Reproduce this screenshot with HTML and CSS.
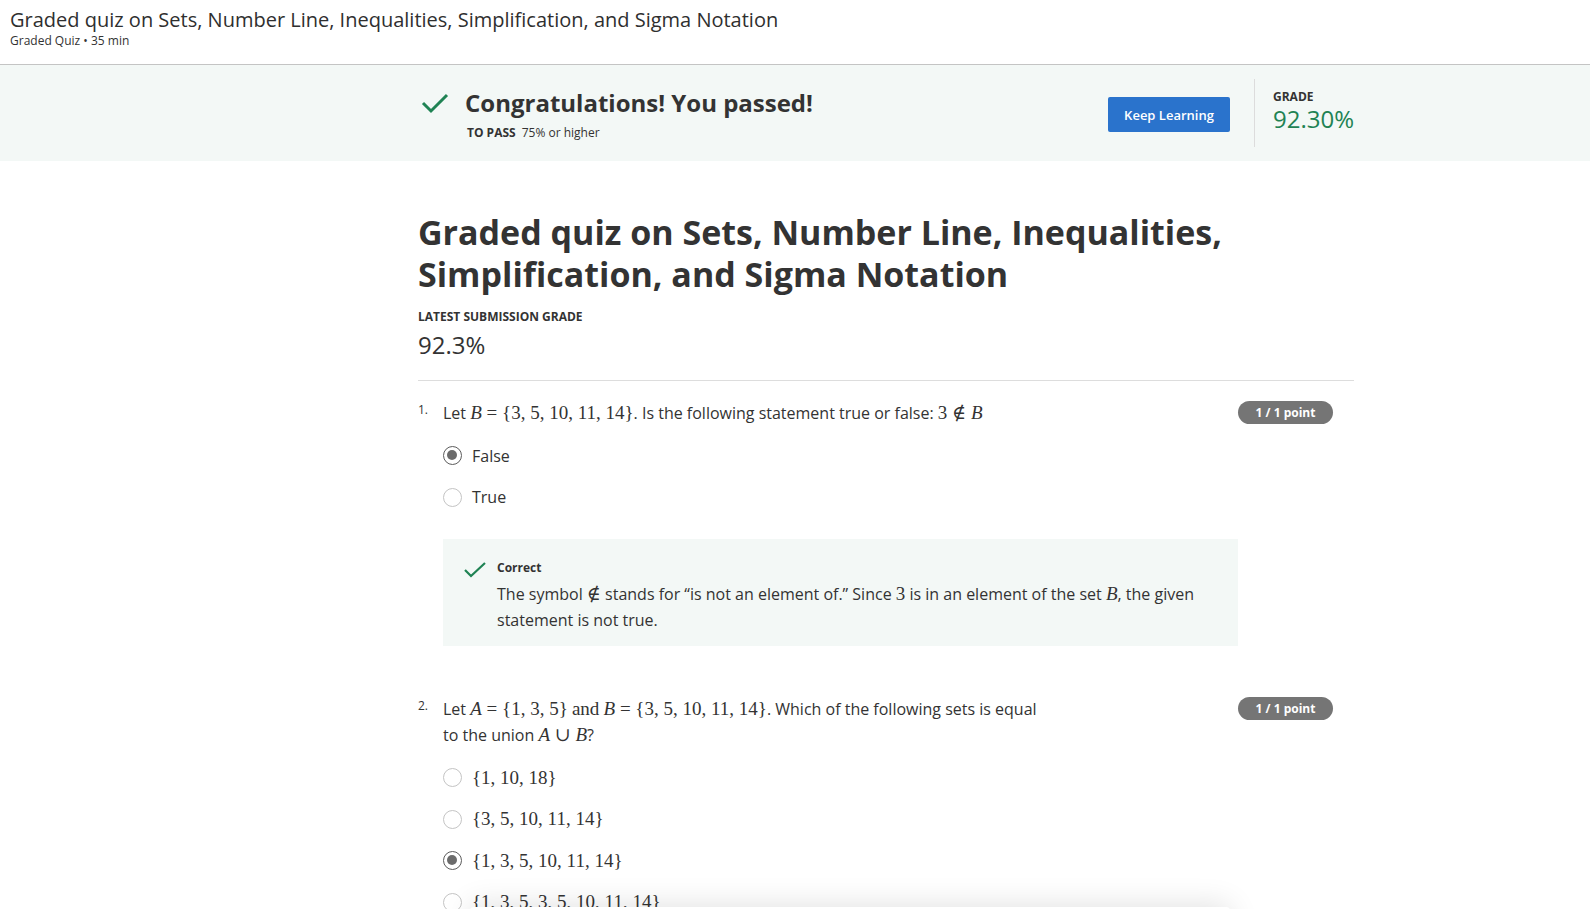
FILE: index.html
```html
<!DOCTYPE html>
<html lang="en">
<head>
<meta charset="utf-8">
<title>Graded quiz</title>
<link rel="stylesheet" href="styles.css">
</head>
<body>
<header class="topbar">
  <div class="topbar-title">Graded quiz on Sets, Number Line, Inequalities, Simplification, and Sigma Notation</div>
  <div class="topbar-sub">Graded Quiz • 35 min</div>
</header>

<section class="banner">
  <div class="banner-inner">
    <div class="pass">
      <svg class="pass-check" width="28" height="22" viewBox="0 0 28 22"><polyline points="2,11 10,19 26,3" fill="none" stroke="#1f8354" stroke-width="3"/></svg>
      <div class="pass-text">
        <div class="pass-title">Congratulations! You passed!</div>
        <div class="pass-sub"><b>TO PASS</b><span>75% or higher</span></div>
      </div>
    </div>
    <button class="btn-primary">Keep Learning</button>
    <div class="grade">
      <div class="grade-label">GRADE</div>
      <div class="grade-value">92.30%</div>
    </div>
  </div>
</section>

<main class="content">
  <h1 class="quiz-title">Graded quiz on Sets, Number Line, Inequalities, Simplification, and Sigma Notation</h1>
  <div class="latest-label">LATEST SUBMISSION GRADE</div>
  <div class="latest-value">92.3%</div>
  <hr class="rule">

  <div class="question">
    <div class="q-num">1.</div>
    <div class="q-body">
      <div class="q-prompt">Let <span class="m"><i>B</i> = {3, 5, 10, 11, 14}</span>. Is the following statement true or false: <span class="m">3 ∉ <i>B</i></span></div>
      <div class="options">
        <div class="option"><span class="radio checked"></span><span class="opt-text">False</span></div>
        <div class="option"><span class="radio"></span><span class="opt-text">True</span></div>
      </div>
    </div>
    <div class="badge">1 / 1 point</div>
    <div class="feedback">
      <svg class="fb-check" width="24" height="18" viewBox="0 0 24 18"><polyline points="2,9 8,15 22,2" fill="none" stroke="#1f8354" stroke-width="2.2"/></svg>
      <div class="fb-text">
        <div class="fb-title">Correct</div>
        <div class="fb-body">The symbol <span class="m">∉</span> stands for “is not an element of.” Since <span class="m">3</span> is in an element of the set <span class="m"><i>B</i></span>, the given statement is not true.</div>
      </div>
    </div>
  </div>

  <div class="question q2">
    <div class="q-num">2.</div>
    <div class="q-body">
      <div class="q-prompt">Let <span class="m"><i>A</i> = {1, 3, 5}</span> <span class="m">and</span> <span class="m"><i>B</i> = {3, 5, 10, 11, 14}</span>. Which of the following sets is equal to the union <span class="m"><i>A</i> ∪ <i>B</i></span>?</div>
      <div class="options">
        <div class="option"><span class="radio"></span><span class="opt-text m">{1, 10, 18}</span></div>
        <div class="option"><span class="radio"></span><span class="opt-text m">{3, 5, 10, 11, 14}</span></div>
        <div class="option"><span class="radio checked"></span><span class="opt-text m">{1, 3, 5, 10, 11, 14}</span></div>
        <div class="option"><span class="radio"></span><span class="opt-text m">{1, 3, 5, 3, 5, 10, 11, 14}</span></div>
      </div>
    </div>
    <div class="badge">1 / 1 point</div>
  </div>
</main>

<div class="floating-bar"></div>
</body>
</html>
```

FILE: styles.css
```css
* { box-sizing: border-box; }
html, body { margin: 0; padding: 0; }
body {
  font-family: "Open Sans", "Liberation Sans", sans-serif;
  color: #333333;
  background: #ffffff;
  overflow: hidden;
  height: 909px;
}

.topbar {
  height: 65px;
  padding: 6px 10px 0;
  border-bottom: 1px solid #c4c4c4;
}
.topbar-title { font-size: 20px; line-height: 28px; color: #2f2f2f; }
.topbar-sub { font-size: 12px; line-height: 14px; color: #333; }

.banner {
  background: #f3f8f6;
  height: 96px;
}
.banner-inner {
  margin-left: 418px;
  width: 936px;
  height: 100%;
  display: flex;
  align-items: center;
}
.pass { display: flex; align-items: flex-start; flex: 1; margin-top: 1px; }
.pass-check { margin: 5px 16px 0 3px; }
.pass-title { font-size: 24px; font-weight: 700; line-height: 32px; color: #333; }
.pass-sub { font-size: 12px; line-height: 16px; margin-top: 6px; padding-left: 2px; }
.pass-sub b { font-weight: 700; margin-right: 6px; }

.btn-primary {
  width: 122px;
  height: 35px;
  border: none;
  border-radius: 2px;
  background: #2a73cc;
  color: #fff;
  font-family: inherit;
  font-size: 13px;
  font-weight: 600;
  padding: 0;
  margin-top: 3px;
}
.grade {
  margin-left: 24px;
  border-left: 1px solid #dcdcdc;
  height: 68px;
  padding-left: 18px;
  width: 100px;
  padding-top: 10px;
}
.grade-label { font-size: 12px; font-weight: 700; line-height: 15px; }
.grade-value { font-size: 24px; line-height: 30px; color: #1f8354; }

.content {
  margin-left: 418px;
  width: 936px;
}
.quiz-title {
  margin: 50px 0 0;
  font-size: 34px;
  line-height: 42px;
  font-weight: 700;
  color: #333;
}
.latest-label { font-size: 12px; font-weight: 700; margin-top: 14px; line-height: 16px; }
.latest-value { font-size: 24px; line-height: 32px; margin-top: 4px; }
.rule { border: none; border-top: 1px solid #dddddd; margin: 19px 0 0; }

.question {
  display: grid;
  grid-template-columns: 25px 1fr 116px;
  margin-top: 19px;
}
.q2 { margin-top: 50px; }
.q-num { font-size: 12px; line-height: 20px; }
.q-prompt { font-size: 16px; line-height: 26px; max-width: 612px; }
.badge {
  justify-self: start;
  background: #757575;
  color: #fff;
  font-size: 12px;
  font-weight: 700;
  width: 95px;
  height: 23px;
  line-height: 23px;
  text-align: center;
  border-radius: 12px;
  margin-top: 1px;
}
.m { font-family: "Liberation Serif", "DejaVu Serif", serif; font-size: 19px; }
.m i { font-style: italic; }

.options { margin-top: 9px; }
.option { display: flex; align-items: center; height: 41.5px; }
.radio {
  width: 19px; height: 19px;
  border: 1.5px solid #c4c4c4;
  border-radius: 50%;
  margin-right: 10px;
  position: relative;
  flex: none;
}
.radio.checked { border-color: #5c5c5c; }
.radio.checked::after {
  content: "";
  position: absolute;
  left: 3px; top: 3px;
  width: 10px; height: 10px;
  border-radius: 50%;
  background: #6b6b6b;
}
.opt-text { font-size: 16px; }
.opt-text.m { font-size: 19px; }

.feedback {
  grid-column: 2 / 4;
  width: 795px;
  background: #f3f8f6;
  margin-top: 21px;
  display: flex;
  padding: 21px 20px 13px;
}
.fb-check { margin-right: 10px; flex: none; margin-top: 1px; }
.fb-title { font-size: 12px; font-weight: 700; line-height: 16px; }
.fb-body { font-size: 16px; line-height: 26px; margin-top: 5px; }

.floating-bar {
  position: fixed;
  left: 470px;
  width: 760px;
  top: 907px;
  height: 60px;
  background: #fff;
  box-shadow: 0 -2px 30px rgba(0,0,0,0.12);
  border-radius: 4px;
}
```
